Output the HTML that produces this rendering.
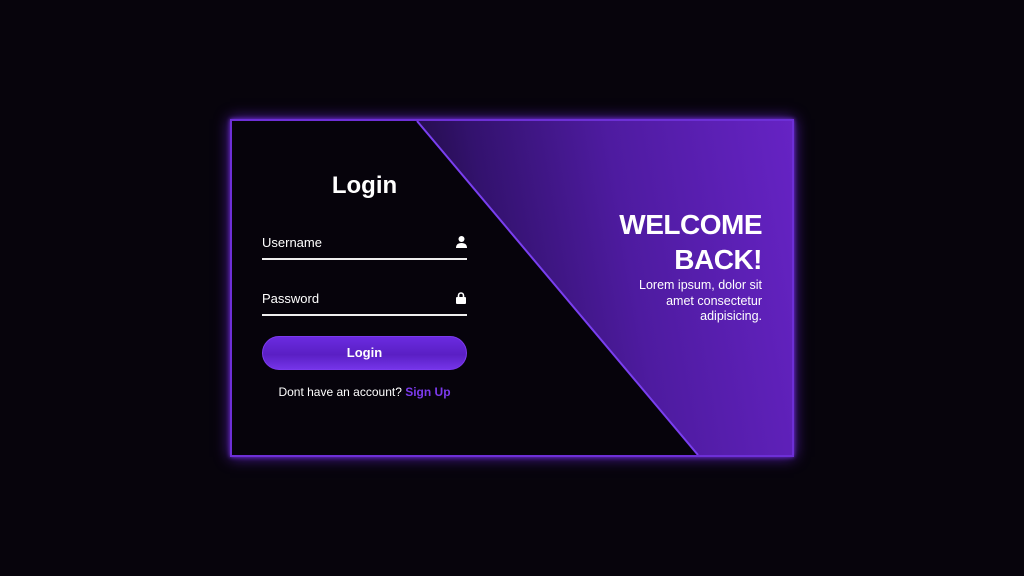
<!DOCTYPE html><html><head><style>
body{margin:0;width:1024px;height:576px;background:#07040c;font-family:"Liberation Sans",sans-serif;overflow:hidden;position:relative}
.box{position:absolute;left:230px;top:119px;width:560px;height:334px;border:2px solid #6d2fd6;box-shadow:0 0 14px #5b21b6,0 0 4px #7c3aed;background:#06030b;overflow:hidden}
.diag{position:absolute;inset:0;clip-path:polygon(185px 0,560px 0,560px 334px,466px 334px);background:linear-gradient(260deg,#6623c4 0%,#4e1ba0 30%,#33126e 52%,#150828 72%,#07030e 88%)}
.line{position:absolute;left:0;top:0}
.t{position:absolute;color:#fff}
.field{position:absolute;left:30px;width:205px;border-bottom:2px solid #eee;height:23px;font-size:13px;color:#fff}
.btn{position:absolute;left:30px;top:215px;width:203px;height:32px;border-radius:17px;background:linear-gradient(#6a2be0,#5a1fc4 55%,#7434e8);border:1px solid #7c3aed;color:#fff;font-weight:bold;font-size:13px;text-align:center;line-height:32px}
</style></head><body>
<div class="box">
<div class="diag"></div>
<svg class="line" width="560" height="334"><line x1="185" y1="0" x2="466" y2="334" stroke="#7a3ff0" stroke-width="2"/></svg>
<div class="t" style="left:30px;width:205px;top:51px;text-align:center;font-size:24px;font-weight:bold">Login</div>
<div class="field" style="top:114px">Username
<svg style="position:absolute;right:0;top:1px" width="11" height="12" viewBox="0 0 11 12"><circle cx="5.5" cy="3" r="3" fill="#fff"/><path d="M0 12 Q0 7 5.5 7 Q11 7 11 12Z" fill="#fff"/></svg></div>
<div class="field" style="top:170px">Password
<svg style="position:absolute;right:1px;top:1px" width="10" height="12" viewBox="0 0 10 12"><path d="M2.5 5V3.5a2.5 2.5 0 0 1 5 0V5" stroke="#fff" stroke-width="1.6" fill="none"/><rect x="0" y="5" width="10" height="7" rx="1" fill="#fff"/></svg></div>
<div class="btn">Login</div>
<div class="t" style="left:30px;width:205px;top:264px;text-align:center;font-size:12px">Dont have an account? <span style="color:#7c3aed;font-weight:bold">Sign Up</span></div>
<div class="t" style="right:30px;top:86px;text-align:right;font-size:28px;font-weight:900;line-height:35px;letter-spacing:-0.5px">WELCOME<br>BACK!</div>
<div class="t" style="right:30px;top:157px;text-align:right;font-size:12.5px;line-height:15.5px">Lorem ipsum, dolor sit<br>amet consectetur<br>adipisicing.</div>
</div>
</body></html>
